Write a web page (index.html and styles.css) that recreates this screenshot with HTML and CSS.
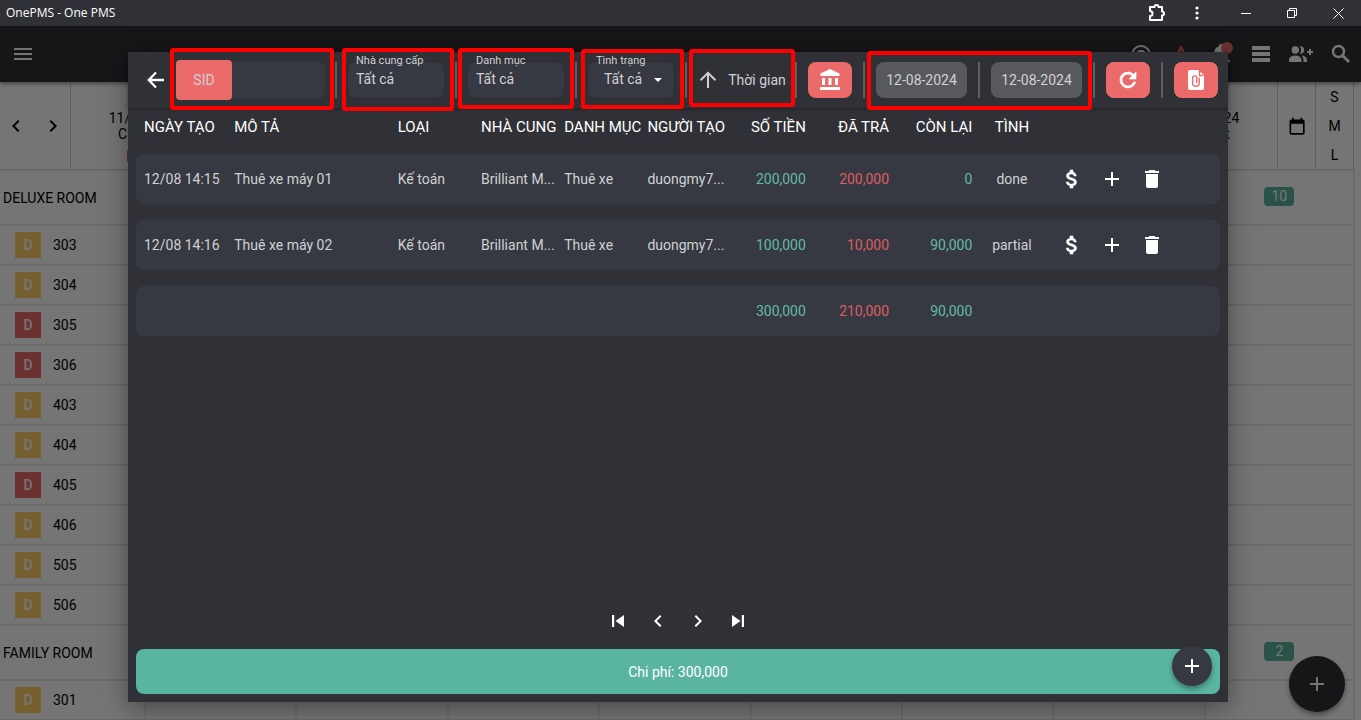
FILE: index.html
```html
<!DOCTYPE html>
<html lang="vi">
<head>
<meta charset="utf-8">
<title>OnePMS - One PMS</title>
<meta name="viewport" content="width=device-width, initial-scale=1">
<link rel="stylesheet" href="styles.css">
</head>
<body>
<svg class="sprite" aria-hidden="true">
  <symbol id="i-plus" viewBox="0 0 24 24"><path d="M19 13h-6v6h-2v-6H5v-2h6V5h2v6h6z"/></symbol>
  <symbol id="i-left" viewBox="0 0 24 24"><path d="M15.41 16.59 10.83 12l4.58-4.59L14 6l-6 6 6 6z"/></symbol>
  <symbol id="i-right" viewBox="0 0 24 24"><path d="M8.59 16.59 13.17 12 8.59 7.41 10 6l6 6-6 6z"/></symbol>
  <symbol id="i-usd" viewBox="0 0 24 24"><path stroke="currentColor" stroke-width=".6" d="M11.8 10.9c-2.27-.59-3-1.2-3-2.15 0-1.09 1.01-1.85 2.7-1.85 1.78 0 2.44.85 2.5 2.1h2.21c-.07-1.72-1.12-3.3-3.21-3.81V3h-3v2.16c-1.94.42-3.5 1.68-3.5 3.61 0 2.31 1.91 3.46 4.7 4.13 2.5.6 3 1.48 3 2.41 0 .69-.49 1.79-2.7 1.79-2.06 0-2.87-.92-2.98-2.1h-2.2c.12 2.19 1.76 3.42 3.68 3.83V21h3v-2.15c1.95-.37 3.5-1.5 3.5-3.55 0-2.84-2.43-3.81-4.7-4.4z"/></symbol>
  <symbol id="i-trash" viewBox="0 0 24 24"><path d="M19 4h-3.500l-1-1h-5l-1 1H5v2h14M6 19a2 2 0 0 0 2 2h8a2 2 0 0 0 2-2V7H6z"/></symbol>
</svg>

<header class="titlebar">
  <span class="titlebar-name">OnePMS - One PMS</span>
  <button class="win win-ext" aria-label="Extensions"><svg width="18" height="18" viewBox="0 0 18 18" fill="none" stroke="currentColor" stroke-width="2" stroke-linejoin="round"><path d="M2 3h4.500a2 2 0 0 1 4 0H14v4.500a2 2 0 0 1 0 4V16H2v-4a2.400 2.400 0 0 0 0-5z"/></svg></button>
  <button class="win win-menu" aria-label="Menu"><svg width="14" height="14" viewBox="0 0 14 14" fill="currentColor"><circle cx="7" cy="2" r="1.600"/><circle cx="7" cy="7" r="1.600"/><circle cx="7" cy="12" r="1.600"/></svg></button>
  <button class="win" aria-label="Minimize"><svg width="10" height="10" viewBox="0 0 10 10" stroke="currentColor"><path d="M0 5.500h10"/></svg></button>
  <button class="win" aria-label="Restore"><svg width="10" height="10" viewBox="0 0 10 10" fill="none" stroke="currentColor"><path d="M.5 2.500h7v7h-7zM2.500 2V.5h7v7H8"/></svg></button>
  <button class="win" aria-label="Close"><svg width="11" height="11" viewBox="0 0 11 11" stroke="currentColor"><path d="M.5.5l10 10M10.500.5l-10 10"/></svg></button>
</header>

<div class="app">
  <nav class="appbar">
    <button class="bar-btn" aria-label="Menu"><svg width="24" height="24" viewBox="0 0 24 24" fill="currentColor"><path d="M3 6h18v2H3zM3 11h18v2H3zM3 16h18v2H3z"/></svg></button>
    <span class="grow"></span>
    <button class="bar-btn" aria-label="Help"><svg width="24" height="24" viewBox="0 0 24 24" fill="none" stroke="currentColor" stroke-width="2"><circle cx="12" cy="13" r="9"/><path d="M8 13a4 4 0 1 1 5 3.800V18"/></svg></button>
    <button class="bar-btn bar-alert" aria-label="Alert"><svg width="24" height="24" viewBox="0 0 24 24" fill="currentColor"><path fill-rule="evenodd" d="M12 3 2 21h20zM11 9h2v6h-2z"/></svg></button>
    <button class="bar-btn bar-bell" aria-label="Notifications"><svg width="24" height="24" viewBox="0 0 24 24" fill="currentColor"><path d="M21 19v1H3v-1l2-2v-6c0-3.100 2-5.800 5-6.700V4a2 2 0 0 1 4 0v.3c3 .9 5 3.600 5 6.700v6z"/></svg><span class="dot"></span></button>
    <button class="bar-btn" aria-label="List"><svg width="24" height="24" viewBox="0 0 24 24" fill="currentColor"><path d="M3 4h18v4H3zM3 10h18v4H3zM3 16h18v4H3z"/></svg></button>
    <button class="bar-btn" aria-label="Add guests"><svg width="24" height="24" viewBox="0 0 24 24" fill="currentColor"><path d="M12.500 18v2H0v-2s0-4.500 6.250-4.500S12.500 18 12.500 18zM10 8a3.700 3.700 0 1 0-7.400 0A3.700 3.700 0 0 0 10 8zM12.500 13.600A5.600 5.600 0 0 1 14.500 18v2H18v-2s0-3.900-5.500-4.400zM11.500 4.300a3.700 3.700 0 1 1-.8 7.300 5.700 5.700 0 0 0 0-7.200zM20 7h2v2h2v2h-2v2h-2v-2h-2V9h2z"/></svg></button>
    <button class="bar-btn" aria-label="Search"><svg width="24" height="24" viewBox="0 0 24 24" fill="none" stroke="currentColor" stroke-width="2.500"><circle cx="9.500" cy="9.500" r="5.500"/><path d="m13.500 13.500 6.500 6.500" stroke-width="3"/></svg></button>
  </nav>

  <main class="board">
    <div class="days">
      <div class="days-nav">
        <button aria-label="Previous"><svg class="icon"><use href="#i-left"/></svg></button>
        <button aria-label="Next"><svg class="icon"><use href="#i-right"/></svg></button>
      </div>
      <div class="day">11/08/2024<br>Chủ nhật<span class="day-tag"></span></div>
      <div class="day"></div><div class="day"></div><div class="day"></div><div class="day"></div><div class="day"></div><div class="day"></div>
      <div class="day">18/08/2024<br>Chủ nhật</div>
      <button class="days-cal" aria-label="Calendar"><svg class="icon" viewBox="0 0 24 24" fill="currentColor"><path d="M19 3h-1V1h-2v2H8V1H6v2H5a2 2 0 0 0-2 2v14a2 2 0 0 0 2 2h14a2 2 0 0 0 2-2V5a2 2 0 0 0-2-2zm0 16H5V8h14z" transform="matrix(.84 0 0 .84 2 3)"/></svg></button>
      <div class="days-size"><button>S</button><button>M</button><button>L</button></div>
    </div>
    <div class="row type"><div class="name">DELUXE ROOM</div><i></i><i></i><i></i><i></i><i></i><i></i><i></i><i><b class="count">10</b></i></div>
    <div class="row"><div class="name"><b class="chip">D</b>303</div><i></i><i></i><i></i><i></i><i></i><i></i><i></i><i></i></div>
    <div class="row"><div class="name"><b class="chip">D</b>304</div><i></i><i></i><i></i><i></i><i></i><i></i><i></i><i></i></div>
    <div class="row"><div class="name"><b class="chip red">D</b>305</div><i></i><i></i><i></i><i></i><i></i><i></i><i></i><i></i></div>
    <div class="row"><div class="name"><b class="chip red">D</b>306</div><i></i><i></i><i></i><i></i><i></i><i></i><i></i><i></i></div>
    <div class="row"><div class="name"><b class="chip">D</b>403</div><i></i><i></i><i></i><i></i><i></i><i></i><i></i><i></i></div>
    <div class="row"><div class="name"><b class="chip">D</b>404</div><i></i><i></i><i></i><i></i><i></i><i></i><i></i><i></i></div>
    <div class="row"><div class="name"><b class="chip red">D</b>405</div><i></i><i></i><i></i><i></i><i></i><i></i><i></i><i></i></div>
    <div class="row"><div class="name"><b class="chip">D</b>406</div><i></i><i></i><i></i><i></i><i></i><i></i><i></i><i></i></div>
    <div class="row"><div class="name"><b class="chip">D</b>505</div><i></i><i></i><i></i><i></i><i></i><i></i><i></i><i></i></div>
    <div class="row"><div class="name"><b class="chip">D</b>506</div><i></i><i></i><i></i><i></i><i></i><i></i><i></i><i></i></div>
    <div class="row type"><div class="name">FAMILY ROOM</div><i></i><i></i><i></i><i></i><i></i><i></i><i></i><i><b class="count">2</b></i></div>
    <div class="row"><div class="name"><b class="chip">D</b>301</div><i></i><i></i><i></i><i></i><i></i><i></i><i></i><i></i></div>
  </main>
  <button class="board-fab" aria-label="Add booking"><svg class="icon"><use href="#i-plus"/></svg></button>

  <div class="backdrop">
    <section class="dialog" role="dialog" aria-label="Chi phí">
      <div class="toolbar">
        <button class="back" aria-label="Back"><svg class="icon" viewBox="0 0 24 24" fill="none" stroke="currentColor" stroke-width="2.300"><path d="M20 12H5M12 4.500 4.800 12l7.200 7.500"/></svg></button>
        <div class="filters">
          <div class="sid"><button>SID</button><input type="text" aria-label="SID"><span class="mark mark-sid"></span></div>
          <span class="sep"></span>
          <div class="field"><label for="vendor">Nhà cung cấp</label><input id="vendor" type="text" value="Tất cả"><span class="mark mark-vendor"></span></div>
          <span class="sep"></span>
          <div class="field"><label for="category">Danh mục</label><input id="category" type="text" value="Tất cả"><span class="mark mark-category"></span></div>
          <span class="sep"></span>
          <div class="field field-status"><label for="status">Tình trạng</label><select id="status"><option>Tất cả</option></select><svg class="caret" width="8" height="4" viewBox="0 0 8 4"><path d="M0 0h8L4 4z"/></svg><span class="mark mark-status"></span></div>
          <span class="sep"></span>
          <div class="sort-wrap"><button class="sort"><svg class="icon" viewBox="0 0 24 24" fill="none" stroke="currentColor" stroke-width="2"><path d="M12 20V5M4.500 12.200 12 4.800l7.500 7.400"/></svg>Thời gian</button><span class="mark mark-sort"></span></div>
        </div>
        <div class="actions">
          <span class="sep"></span>
          <button class="act" aria-label="Bank"><svg class="icon" viewBox="0 0 24 24" fill="currentColor"><path d="M12 1 2.500 5.500V8h19V5.500zM4 10h3v7H4zM10.500 10h3v7h-3zM17 10h3v7h-3zM2 19h20v3H2z"/></svg></button>
          <span class="sep"></span>
          <div class="dates"><button class="date">12-08-2024</button><span class="sep"></span><button class="date">12-08-2024</button><span class="mark mark-dates"></span></div>
          <span class="sep"></span>
          <button class="act" aria-label="Refresh"><svg class="icon" viewBox="0 0 24 24" fill="currentColor" stroke="currentColor" stroke-width=".7"><path d="M17.650 6.350A8 8 0 0 0 4 12a8 8 0 0 0 15.730 2h-2.080A6 6 0 1 1 16.220 7.780L13 11h7V4z"/></svg></button>
          <span class="sep"></span>
          <button class="act" aria-label="Export"><svg class="icon" viewBox="0 0 24 24"><path fill="currentColor" d="M14 2H6a2 2 0 0 0-2 2v16c0 1.100.9 2 2 2h12a2 2 0 0 0 2-2V7z"/><path fill="none" stroke="#eb6a6a" stroke-width="1.400" d="M15.500 3v4.500h4M15.200 9.500v5.500a3.300 3.300 0 0 1-6.600 0v-5a2.100 2.100 0 0 1 4.200 0v5"/></svg></button>
        </div>
      </div>

      <table class="costs">
        <thead>
          <tr><th>NGÀY TẠO</th><th>MÔ TẢ</th><th>LOẠI</th><th>NHÀ CUNG</th><th>DANH MỤC</th><th>NGƯỜI TẠO</th><th class="num">SỐ TIỀN</th><th class="num">ĐÃ TRẢ</th><th class="num">CÒN LẠI</th><th class="mid">TÌNH</th><th></th></tr>
        </thead>
        <tbody>
          <tr><td>12/08 14:15</td><td>Thuê xe máy 01</td><td>Kế toán</td><td>Brilliant M...</td><td>Thuê xe</td><td>duongmy7...</td><td class="num teal">200,000</td><td class="num coral">200,000</td><td class="num teal">0</td><td class="mid">done</td><td class="tools"><button aria-label="Pay"><svg class="icon"><use href="#i-usd"/></svg></button><button aria-label="Add"><svg class="icon"><use href="#i-plus"/></svg></button><button aria-label="Delete"><svg class="icon"><use href="#i-trash"/></svg></button></td></tr>
          <tr><td>12/08 14:16</td><td>Thuê xe máy 02</td><td>Kế toán</td><td>Brilliant M...</td><td>Thuê xe</td><td>duongmy7...</td><td class="num teal">100,000</td><td class="num coral">10,000</td><td class="num teal">90,000</td><td class="mid">partial</td><td class="tools"><button aria-label="Pay"><svg class="icon"><use href="#i-usd"/></svg></button><button aria-label="Add"><svg class="icon"><use href="#i-plus"/></svg></button><button aria-label="Delete"><svg class="icon"><use href="#i-trash"/></svg></button></td></tr>
        </tbody>
        <tfoot>
          <tr><td></td><td></td><td></td><td></td><td></td><td></td><td class="num teal">300,000</td><td class="num coral">210,000</td><td class="num teal">90,000</td><td></td><td></td></tr>
        </tfoot>
      </table>

      <div class="pager">
        <button aria-label="First"><svg class="icon" viewBox="0 0 24 24" fill="currentColor"><path d="M18 18V6l-8.500 6zM8.200 6v12H6V6z"/></svg></button>
        <button aria-label="Previous"><svg class="icon"><use href="#i-left"/></svg></button>
        <button aria-label="Next"><svg class="icon"><use href="#i-right"/></svg></button>
        <button aria-label="Last"><svg class="icon" viewBox="0 0 24 24" fill="currentColor"><path d="M6 18V6l8.500 6zM15.800 6v12H18V6z"/></svg></button>
      </div>
      <div class="total">Chi phí: 300,000<button class="total-fab" aria-label="Add cost"><svg class="icon"><use href="#i-plus"/></svg></button></div>
    </section>
  </div>
</div>
</body>
</html>
```

FILE: styles.css
```css
* { box-sizing: border-box; }

body {
  margin: 0;
  height: 100vh;
  display: flex;
  flex-direction: column;
  overflow: hidden;
  font: 14px/20px Roboto, "Noto Sans", sans-serif;
  color: #000;
}

button, input, select { font: inherit; color: inherit; }

button {
  display: flex;
  align-items: center;
  justify-content: center;
  flex: none;
  margin: 0;
  padding: 0;
  border: 0;
  background: none;
  cursor: pointer;
}

.sprite { display: none; }
.icon { width: 24px; height: 24px; fill: currentColor; flex: none; }
.icon[fill="none"] { fill: none; }
.grow { flex: 1; }

/* Window title bar */
.titlebar {
  display: flex;
  align-items: center;
  flex: none;
  height: 26px;
  padding-left: 6px;
  background: #303136;
  color: #fff;
  font: 12px/16px "Open Sans", "Noto Sans", sans-serif;
}
.titlebar-name { flex: 1; }
.win { width: 46px; height: 26px; }
.win-ext, .win-menu { width: 40px; }
.win-menu { margin-right: 6px; }

/* Application bar */
.app {
  position: relative;
  flex: 1;
  min-height: 0;
  display: flex;
  flex-direction: column;
  overflow: hidden;
}
.appbar {
  display: flex;
  align-items: center;
  flex: none;
  height: 56px;
  padding-left: 3px;
  background: #303136;
  color: #fff;
  box-shadow: 0 2px 4px rgba(0, 0, 0, .4);
  z-index: 1;
}
.bar-btn { width: 40px; height: 40px; position: relative; }
.bar-alert { color: #eb6a6a; }
.dot {
  position: absolute;
  top: 8px;
  right: 8px;
  width: 12px;
  height: 12px;
  border-radius: 50%;
  background: #eb6a6a;
}

/* Room board */
.board { flex: 1; background: #fff; padding-right: 6px; }
.days {
  display: flex;
  height: 88px;
  padding-right: 1px;
  border-bottom: 1px solid #e0e0e0;
}
.days > * { border-right: 1px solid #d0d0d0; }
.days-nav { display: flex; flex: none; width: 71px; align-items: center; }
.days-nav button { width: 35px; height: 40px; }
.days-nav button:first-child { padding-right: 4px; }
.day {
  flex: 1;
  min-width: 0;
  padding-top: 28px;
  text-align: center;
  line-height: 16px;
}
.days .day { border-color: transparent; }
.days .day:nth-child(9) { border-color: #d0d0d0; }
.day-tag {
  display: block;
  width: 38px;
  height: 16px;
  margin: 6px auto 0;
  border-radius: 4px;
  background: #eb6a6a;
}
.days-cal, .days-size { width: 38px; }
.days .days-cal { border-right: 1px solid #d0d0d0; }
.days-size {
  display: flex;
  flex: none;
  flex-direction: column;
  align-items: center;
}
.days-size button { height: 29px; }

.row {
  display: grid;
  grid-template-columns: 144px repeat(8, 1fr);
  height: 40px;
  border-top: 1px solid #e6e6e6;
  border-bottom: 1px solid #e6e6e6;
}
.row.type { height: 55px; }
.row i {
  display: flex;
  align-items: center;
  justify-content: center;
  font-style: normal;
  border-left: 2px solid #ececec;
}
.row i:last-child { border-right: 2px solid #ececec; }
.name { display: flex; align-items: center; gap: 12px; padding-left: 15px; }
.type .name { padding-left: 3px; }
.chip {
  width: 26px;
  height: 26px;
  background: #ffd166;
  color: #fff;
  font-weight: 500;
  line-height: 26px;
  text-align: center;
}
.chip.red { background: #eb6a6a; }
.count {
  width: 30px;
  height: 19px;
  margin-bottom: 2px;
  border-radius: 4px;
  background: #5ab5a0;
  color: #fff;
  font-weight: 400;
  line-height: 19px;
  text-align: center;
}
.board-fab {
  position: absolute;
  right: 16px;
  bottom: 8px;
  width: 56px;
  height: 56px;
  border-radius: 50%;
  background: #303136;
  color: #fff;
  box-shadow: 0 3px 5px rgba(0, 0, 0, .4);
}

/* Dialog */
.backdrop {
  position: absolute;
  inset: 0;
  z-index: 2;
  display: flex;
  justify-content: center;
  padding: 26px 5px 18px 0;
  background: rgba(0, 0, 0, .54);
}
.dialog {
  display: flex;
  flex-direction: column;
  width: 100%;
  max-width: 1100px;
  background: #303136;
  color: #d0d1d4;
  box-shadow: 0 6px 24px rgba(0, 0, 0, .4);
}
.toolbar {
  display: flex;
  align-items: center;
  flex: none;
  height: 56px;
  padding: 0 10px 0 8px;
  box-shadow: 0 1px 3px rgba(0, 0, 0, .35);
}
.back { width: 40px; height: 40px; color: #fff; }
.filters {
  display: flex;
  flex: 1;
  min-width: 0;
  align-items: center;
  gap: 10px;
  margin-right: 10px;
}
.actions { display: flex; flex: none; align-items: center; gap: 11px; }
.sep { flex: none; width: 2px; height: 36px; background: #5e5f63; }

.sid { position: relative; display: flex; align-items: center; flex: 1; min-width: 0; }
.sid button {
  width: 56px;
  height: 40px;
  border-radius: 4px;
  background: #eb6a6a;
}
.sid input {
  flex: 1;
  width: 0;
  min-width: 0;
  height: 38px;
  padding: 0 8px;
  border: 0;
  border-radius: 0 8px 8px 0;
  background: #363941;
}
.field { position: relative; flex: none; width: 98px; }
.field-status { width: 88px; }
.field label {
  position: absolute;
  top: -7px;
  left: 9px;
  font-size: 11px;
  line-height: 14px;
  white-space: nowrap;
}
.field input, .field select {
  display: block;
  width: 100%;
  height: 38px;
  padding: 0 8px 2px;
  border: 1px solid #2c2d32;
  border-radius: 8px;
  background: #363941;
  appearance: none;
}
.field select { padding-left: 16px; }
.caret { position: absolute; right: 13px; top: 17px; fill: #fff; }
.sort-wrap { position: relative; flex: none; }
.sort { width: 88px; height: 36px; gap: 8px; white-space: nowrap; }
.act {
  width: 44px;
  height: 36px;
  border-radius: 8px;
  background: #eb6a6a;
  color: #fff;
}
.dates { position: relative; display: flex; gap: 11px; }
.date { width: 91px; height: 36px; border-radius: 8px; background: #58595d; }

/* Highlight frames around the filters */
.mark {
  position: absolute;
  border: 4px solid #f00;
  border-radius: 3px;
  pointer-events: none;
}
.mark-sid { inset: -12px -9px -10px -6px; }
.mark-vendor { inset: -13px -9px -12px -5px; }
.mark-category { inset: -13px -9px -10px -9px; }
.mark-status { inset: -12px -9px -10px -6px; }
.mark-sort { inset: -13px -10px -9px -8px; }
.mark-dates { inset: -11px -10px -12px -9px; }

/* Cost table */
.costs { display: grid; gap: 16px; padding: 8px 8px 0; }
.costs thead, .costs tfoot { display: block; }
.costs tbody { display: grid; gap: 16px; }
.costs tr {
  display: grid;
  grid-template-columns: 90fr 163fr repeat(7, 83fr) 71fr 168fr;
  align-items: center;
  height: 50px;
  padding-left: 8px;
  border-radius: 8px;
  background: #363941;
}
.costs thead tr { height: 22px; background: none; color: #fff; }
.costs th, .costs td {
  min-width: 0;
  padding: 0;
  text-align: left;
  white-space: nowrap;
}
.costs th { font-size: 15px; line-height: 22px; font-weight: 400; }
.costs .num { padding-right: 8px; text-align: right; }
.costs .mid { padding-right: 8px; text-align: center; }
.costs .teal { color: #64b9a4; }
.costs .coral { color: #dd5f63; }
.costs .tools { display: flex; color: #fff; }
.tools button, .pager button { width: 40px; height: 40px; }

.pager {
  display: flex;
  justify-content: center;
  margin: auto 0 8px;
  color: #fff;
}
.total {
  position: relative;
  margin: 0 8px 8px;
  padding: 13px 12px 12px;
  border-radius: 8px;
  background: #5ab5a0;
  color: #fff;
  text-align: center;
}
.total-fab {
  position: absolute;
  top: -3px;
  right: 8px;
  width: 40px;
  height: 40px;
  border-radius: 50%;
  background: #363941;
  box-shadow: 0 3px 5px rgba(0, 0, 0, .35);
}
```
